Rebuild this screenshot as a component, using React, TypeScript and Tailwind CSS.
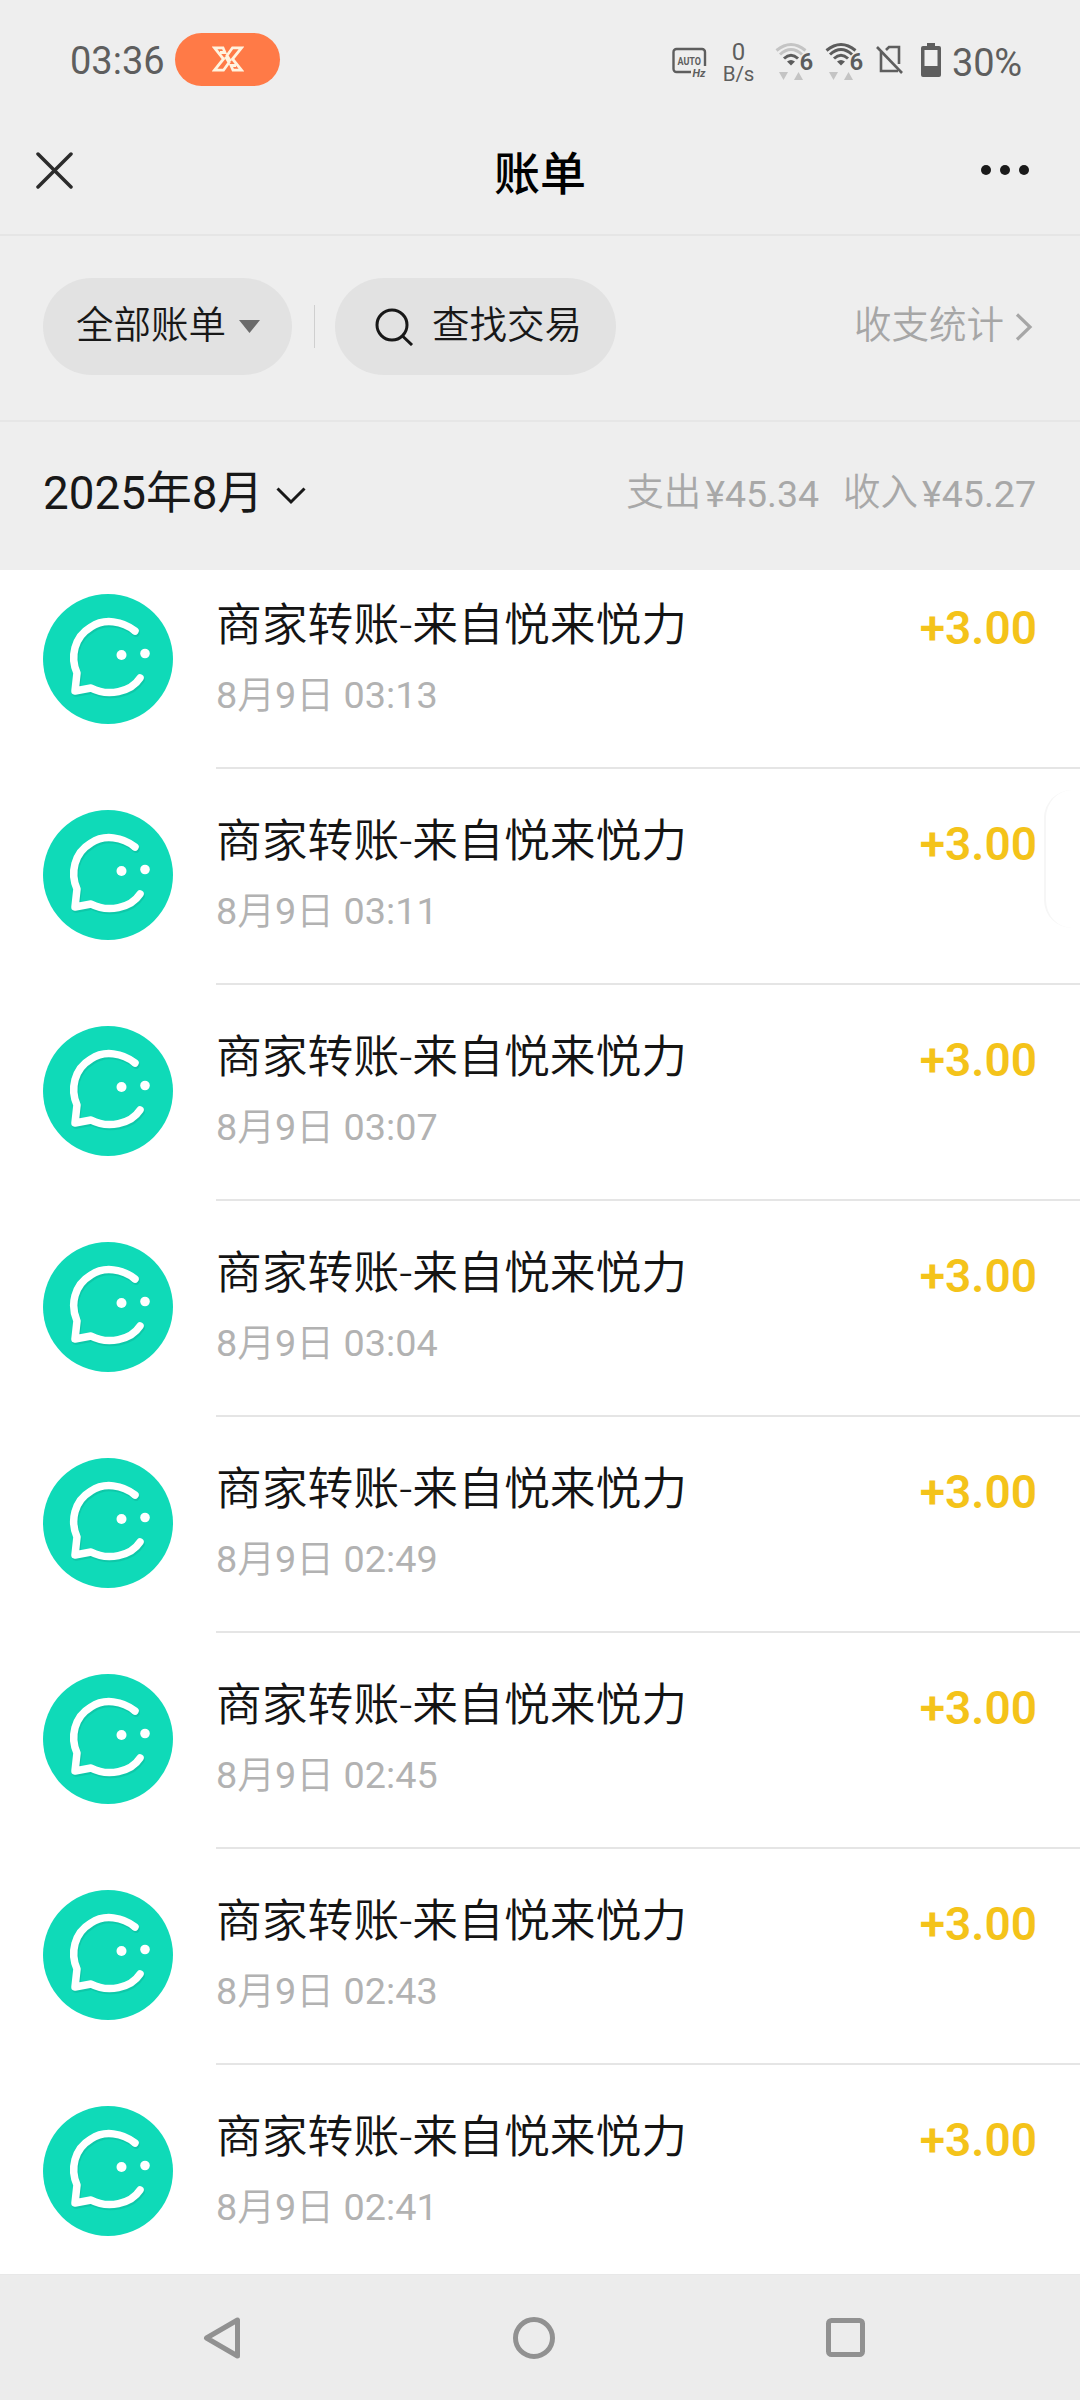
import type { ReactNode } from "react";

interface Transaction {
  id: number;
  title: string;
  time: string;
  amount: string;
}

const TITLE = "商家转账-来自悦来悦力";

const transactions: Transaction[] = [
  "03:13",
  "03:11",
  "03:07",
  "03:04",
  "02:49",
  "02:45",
  "02:43",
  "02:41",
].map((time, i) => ({
  id: i,
  title: TITLE,
  time,
  amount: "+3.00",
}));

function WifiIcon({ weak }: { weak?: boolean }) {
  const outer = weak ? "#c4c4c4" : "#5c5c5c";
  return (
    <svg width="38" height="40" viewBox="0 0 38 40" fill="none">
      <path d="M1.5 9.5Q16 -2.500 30.500 9.500" stroke={outer} strokeWidth="3" />
      <path d="M5 13.500Q16 3.500 27 13.500" stroke={outer} strokeWidth="3" />
      <path d="M9 17.500Q16 11 23 17.500" stroke="#5c5c5c" strokeWidth="3" />
      <path d="M12 20.500Q16 17.500 20 20.500L16 24.500Z" fill="#5c5c5c" />
      <text x="24.500" y="29" fontSize="24" fontWeight="600" fill="#5c5c5c" className="font-[Roboto]">
        6
      </text>
      <path d="M4 31h9l-4.500 8zM19 39h9l-4.500-8z" fill="#c4c4c4" />
    </svg>
  );
}

function StatusBar() {
  return (
    <div className="h-[120px] flex justify-between text-[#5e5e5e]">
      <div className="flex items-center h-[118px] pl-[70px]">
        <span className="w-[105px] pt-[3px] text-[38px] leading-none">03:36</span>
        <div className="w-[105px] h-[53px] rounded-full bg-[#ff7a47] flex items-center justify-center">
          <svg width="32" height="26" viewBox="0 0 32 26" fill="none" stroke="#fff3df" strokeWidth="2.800">
            <path d="M8 6.500H13L11 1.800H2.500L11.500 13L2.500 24.200H11.500L17 16.500L13.500 10.500" />
            <path d="M24 19.500H19L21 24.200H29.500L20.500 13L29.500 1.800H20.500L15 9.500L18.500 15.500" />
          </svg>
        </div>
      </div>
      <div className="flex items-start pt-[41px] pr-[58px]">
        <svg className="mt-[6px]" width="36" height="32" viewBox="0 0 36 32" fill="none">
          <path d="M19 25H4.500A3 3 0 0 1 1.500 22V5A3 3 0 0 1 4.500 2H30A3 3 0 0 1 33 5V19" stroke="#5e5e5e" strokeWidth="2.400" />
          <text x="5.500" y="17.500" fontSize="11.500" fontWeight="700" textLength="23.500" lengthAdjust="spacingAndGlyphs" fill="#5e5e5e" className="font-[Roboto]">
            AUTO
          </text>
          <text x="20.500" y="29.500" fontSize="11" fontWeight="700" fontStyle="italic" fill="#5e5e5e" className="font-[Roboto]">
            Hz
          </text>
        </svg>
        <div className="ml-[15px] w-[31px] flex flex-col items-center text-[24px] leading-[22px]">
          <span>0</span>
          <span className="text-[20.500px]">B/s</span>
        </div>
        <div className="ml-[21px] flex gap-[12px]">
          <WifiIcon weak />
          <WifiIcon />
        </div>
        <svg className="ml-[13px] mt-[3px]" width="28" height="31" viewBox="0 0 28 31" fill="none" stroke="#5e5e5e" strokeWidth="2.600">
          <path d="M1 3L26 29" />
          <path d="M5 8V27H22M10 6L13 3H23V20" />
        </svg>
        <svg className="ml-[17px] mt-[2px]" width="20" height="34" viewBox="0 0 20 34">
          <path d="M6 0h8v3h4a2 2 0 0 1 2 2v27a2 2 0 0 1-2 2h-16a2 2 0 0 1-2-2v-27a2 2 0 0 1 2-2h4zM3.500 7v16h13v-16z" fill="#5e5e5e" fillRule="evenodd" />
        </svg>
        <span className="ml-[11px] mt-[3px] text-[38px] leading-[38px] tracking-[-0.2px]">30%</span>
      </div>
    </div>
  );
}

function NavBar() {
  return (
    <div className="h-[116px] px-[36px] pb-[14px] flex items-center justify-between border-b-2 border-[#e5e5e5]">
      <svg width="37" height="37" viewBox="0 0 37 37" fill="none" stroke="#2b2b2b" strokeWidth="3.500" strokeLinecap="round">
        <path d="M2 2L35 35M35 2L2 35" />
      </svg>
      <h1 className="pt-[7px] ml-[27px] text-[46px] leading-none font-medium text-black">账单</h1>
      <svg className="mr-[14px]" width="50" height="12" viewBox="0 0 50 12" fill="#1a1a1a">
        <circle cx="6" cy="6" r="5" />
        <circle cx="25" cy="6" r="5" />
        <circle cx="44" cy="6" r="5" />
      </svg>
    </div>
  );
}

function Pill({ className, children }: { className: string; children: ReactNode }) {
  return (
    <button className={`h-[97px] rounded-full bg-[#e2e2e2] text-[#181818] flex items-center ${className}`}>
      {children}
    </button>
  );
}

function FilterBar() {
  return (
    <div className="h-[186px] pl-[43px] pr-[47px] pb-[3px] flex items-center border-b-2 border-[#e6e6e6] text-[37.500px] font-[350] leading-none">
      <Pill className="w-[249px] pl-[33px]">
        <span className="pb-[2px]">全部账单</span>
        <svg className="ml-[13px]" width="21" height="13" viewBox="0 0 21 13">
          <path d="M0 0h21l-10.500 13z" fill="#6b6b6b" />
        </svg>
      </Pill>
      <div className="ml-[22px] w-px h-[43px] bg-[#cfcfcf]" />
      <Pill className="ml-[20px] w-[281px] pl-[40px]">
        <svg width="39" height="38" viewBox="0 0 39 38" fill="none" stroke="#181818" strokeWidth="3">
          <circle cx="17" cy="17" r="15" />
          <path d="M27.500 28L37 37" />
        </svg>
        <span className="ml-[18px] pb-[2px]">查找交易</span>
      </Pill>
      <div className="ml-auto flex items-center text-[#a6a6a6]">
        <span className="pb-[2px]">收支统计</span>
        <svg className="ml-[11px]" width="18" height="28" viewBox="0 0 18 28" fill="none" stroke="currentColor" strokeWidth="3.200">
          <path d="M2 1.500L15 14L2 26.500" />
        </svg>
      </div>
    </div>
  );
}

function MonthHeader() {
  return (
    <div className="h-[148px] pl-[43px] pr-[44px] flex items-center">
      <span className="pb-[4px] text-[45.800px] leading-none text-[#181818]">2025年8月</span>
      <svg className="ml-[13px]" width="30" height="18" viewBox="0 0 30 18" fill="none" stroke="#181818" strokeWidth="3">
        <path d="M1.500 1.500L15 15L28.500 1.500" />
      </svg>
      <div className="ml-auto pb-[6px] flex gap-[24px] text-[37.500px] font-[350] leading-none text-[#a8a8a8]">
        <span>
          支出<span className="relative top-[2px] ml-[4px] font-normal">¥45.34</span>
        </span>
        <span>
          收入<span className="relative top-[2px] ml-[4px] font-normal">¥45.27</span>
        </span>
      </div>
    </div>
  );
}

function MerchantLogo() {
  return (
    <svg className="shrink-0" width="130" height="130" viewBox="0 0 130 130" fill="none">
      <circle cx="65" cy="65" r="65" fill="#0fdab8" />
      <g strokeLinecap="round" strokeLinejoin="round" strokeWidth="7.500">
        <path
          d="M92 37C80 27 61 24 48 33C31 43 27 63 34 79L32 97L48 94C65 103 88 98 97 84"
          stroke="#0a9f87"
          strokeOpacity="0.3"
          transform="translate(1 2)"
        />
        <path d="M92 37C80 27 61 24 48 33C31 43 27 63 34 79L32 97L48 94C65 103 88 98 97 84" stroke="#fff" />
      </g>
      <circle cx="78.500" cy="61" r="5" fill="#fff" />
      <circle cx="102" cy="59.500" r="4.800" fill="#fff" />
    </svg>
  );
}

function TransactionRow({ item }: { item: Transaction }) {
  return (
    <li className="h-[216px] pl-[43px] flex">
      <div className="pt-[41px]">
        <MerchantLogo />
      </div>
      <div className="ml-[43px] flex-1 border-b-2 border-[#e5e5e5] pr-[43px] flex justify-between">
        <div>
          <div className="mt-[48px] text-[45.800px] leading-[50px] font-[350] text-[#141414]">{item.title}</div>
          <div className="mt-[24px] text-[37.800px] leading-[40px] text-[#b2b2b2]">
            8<span className="font-[350]">月</span>9<span className="font-[350]">日</span> {item.time}
          </div>
        </div>
        <div className="mt-[50px] text-[46px] leading-[50px] font-semibold text-[#f4c31a]">{item.amount}</div>
      </div>
    </li>
  );
}

function SystemNav() {
  return (
    <div className="h-[126px] pl-[203px] pr-[215px] bg-[#ececec] border-t border-[#e8e8e8] flex items-center justify-between">
      <svg width="42" height="42" viewBox="0 0 42 42" fill="none" stroke="#919191" strokeWidth="5" strokeLinejoin="round">
        <path d="M34.500 3V39L3.500 21Z" />
      </svg>
      <svg className="-ml-[3px]" width="42" height="42" viewBox="0 0 42 42" fill="none" stroke="#919191" strokeWidth="5">
        <circle cx="21" cy="21" r="18.500" />
      </svg>
      <svg width="39" height="39" viewBox="0 0 39 39" fill="none" stroke="#919191" strokeWidth="5">
        <rect x="2.500" y="2.500" width="34" height="34" rx="3" />
      </svg>
    </div>
  );
}

export default function App() {
  return (
    <div className="relative w-[1080px] h-[2400px] overflow-hidden bg-white flex flex-col font-[Roboto,'Noto_Sans_CJK_SC',sans-serif]">
      <header className="shrink-0 bg-[#eeeeee]">
        <StatusBar />
        <NavBar />
        <FilterBar />
        <MonthHeader />
      </header>

      <main className="flex-1 min-h-0 overflow-hidden">
        <ul className="-mt-[17px]">
          {transactions.map((item) => (
            <TransactionRow key={item.id} item={item} />
          ))}
        </ul>
      </main>

      <SystemNav />

      {/* Edge panel handle */}
      <div className="absolute right-0 top-[790px] w-[36px] h-[138px] rounded-l-[28px] border-l-2 border-[#f6f6f6]" />
    </div>
  );
}
